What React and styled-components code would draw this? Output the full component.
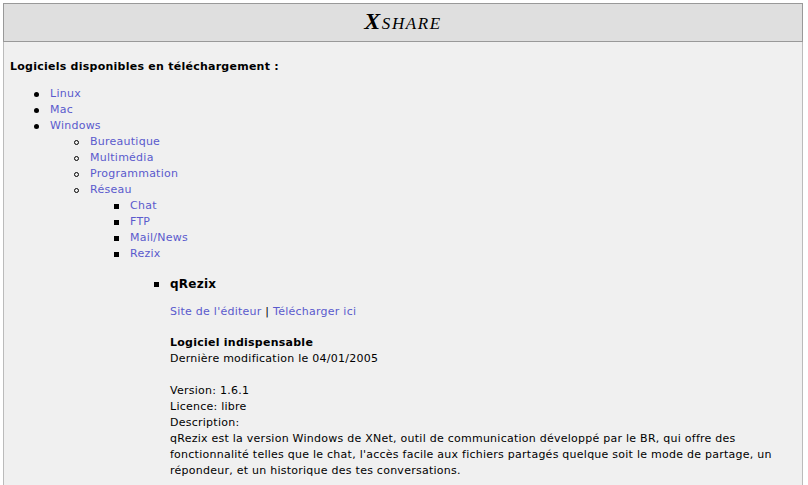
import React from 'react';
import styled, { createGlobalStyle, css } from 'styled-components';

const GlobalStyle = createGlobalStyle`
  html, body {
    margin: 0;
    padding: 0;
    background: #ffffff;
  }
  body {
    padding: 3px 5px 0 3px;
    font-family: "DejaVu Sans", Verdana, sans-serif;
    font-size: 11px;
    line-height: 16px;
    letter-spacing: 0.25px;
    color: #000;
  }
`;

const Header = styled.header`
  background: #dfdfdf;
  border: 1px solid #999999;
  box-sizing: border-box;
  height: 39px;
  padding-bottom: 3px;
  display: flex;
  align-items: center;
  justify-content: center;
`;

const Title = styled.h1`
  margin: 0;
  font-family: "Liberation Serif", "Times New Roman", serif;
  font-style: italic;
  font-weight: normal;
  font-size: 24px;
  font-variant: small-caps;
  color: #000;
  letter-spacing: 1.6px;

  span {
    font-weight: bold;
  }
`;

const Main = styled.main`
  background: #f0f0f0;
  border-left: 1px solid #bbbbbb;
  border-right: 1px solid #bbbbbb;
  padding: 17px 6px 20px 6px;
  min-height: 420px;
`;

const Intro = styled.p`
  margin: 0 0 11px;
  font-weight: bold;
`;

const bullets = {
  disc: css`
    border-radius: 50%;
    background: #000;
  `,
  circle: css`
    border-radius: 50%;
    border: 1px solid #000;
    box-sizing: border-box;
  `,
  square: css`
    background: #000;
  `,
};

const List = styled.ul`
  margin: 0;
  padding-left: 40px;
  list-style: none;

  & > li {
    position: relative;
  }

  & > li::before {
    content: '';
    position: absolute;
    left: -16px;
    top: 6px;
    width: 5px;
    height: 5px;
    ${(p) => bullets[p.$bullet || 'disc']}
  }
`;

const Link = styled.a`
  color: #5a5acd;
  text-decoration: none;
`;

const Soft = styled.li`
  margin-top: 14px;
`;

const SoftName = styled.div`
  font-weight: bold;
  font-size: 12px;
`;

const Links = styled.p`
  margin: 12px 0 15px;
`;

const Block = styled.p`
  margin: 0 0 16px;
`;

const Desc = styled.p`
  margin: 0;
`;

export default function App() {
  return (
    <>
      <GlobalStyle />
      <Header>
        <Title><span>X</span>share</Title>
      </Header>
      <Main>
        <Intro>Logiciels disponibles en téléchargement :</Intro>
        <List $bullet="disc">
          <li><Link href="#">Linux</Link></li>
          <li><Link href="#">Mac</Link></li>
          <li>
            <Link href="#">Windows</Link>
            <List $bullet="circle">
              <li><Link href="#">Bureautique</Link></li>
              <li><Link href="#">Multimédia</Link></li>
              <li><Link href="#">Programmation</Link></li>
              <li>
                <Link href="#">Réseau</Link>
                <List $bullet="square">
                  <li><Link href="#">Chat</Link></li>
                  <li><Link href="#">FTP</Link></li>
                  <li><Link href="#">Mail/News</Link></li>
                  <li>
                    <Link href="#">Rezix</Link>
                    <List $bullet="square">
                      <Soft>
                        <SoftName>qRezix</SoftName>
                        <Links>
                          <Link href="#">Site de l'éditeur</Link> | <Link href="#">Télécharger ici</Link>
                        </Links>
                        <Block>
                          <strong>Logiciel indispensable</strong><br />
                          Dernière modification le 04/01/2005
                        </Block>
                        <Desc>
                          Version: 1.6.1<br />
                          Licence: libre<br />
                          Description:<br />
                          qRezix est la version Windows de XNet, outil de communication développé par le BR, qui offre des fonctionnalité telles que le chat, l'accès facile aux fichiers partagés quelque soit le mode de partage, un répondeur, et un historique des tes conversations.
                        </Desc>
                      </Soft>
                    </List>
                  </li>
                </List>
              </li>
            </List>
          </li>
        </List>
      </Main>
    </>
  );
}
